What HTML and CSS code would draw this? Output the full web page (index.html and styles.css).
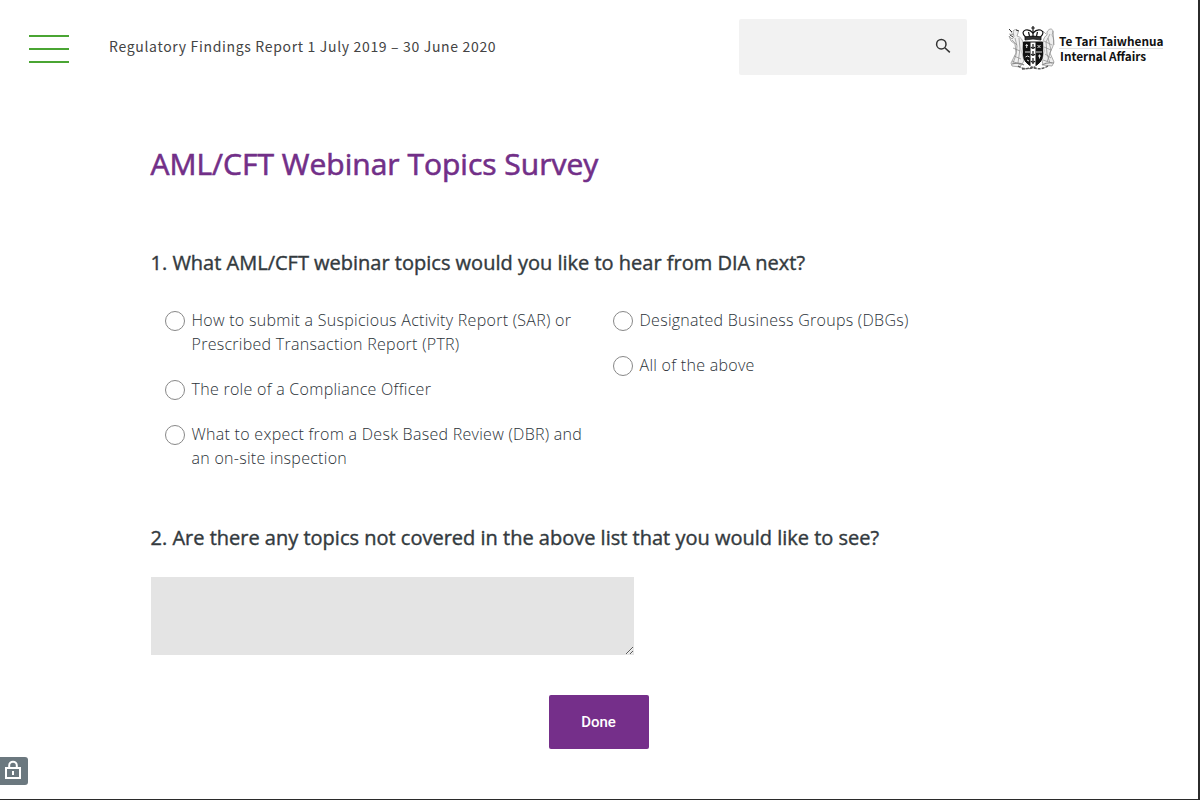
FILE: index.html
```html
<!DOCTYPE html>
<html lang="en">
<head>
<meta charset="utf-8">
<title>AML/CFT Webinar Topics Survey</title>
<link rel="stylesheet" href="styles.css">
</head>
<body>
<div class="page">
  <header class="header">
    <button class="menu" aria-label="Menu"><span></span><span></span><span></span></button>
    <div class="report">Regulatory Findings Report 1 July 2019 – 30 June 2020</div>
    <div class="search">
      <svg width="16" height="16" viewBox="0 0 16 16" fill="none" stroke="#333" stroke-width="1.5"><circle cx="6.3" cy="6.2" r="4.7"/><path d="M9.8 9.8L14.8 14.4"/></svg>
    </div>
    <div class="brand">
      <svg class="crest" width="48" height="46" viewBox="0 0 48 46" fill="none" stroke="#111" stroke-width=".8">
        <g stroke="#8a8a8a" stroke-width=".7">
          <path d="M5 5c3-3 6-1 5 2l-1 3c4 1 6 4 6 8l-1 8 2 9-4 6-8-1-1-3 5-10-1-9-4-3-2-5 3 3 2-2z" fill="#f0f0f0"/>
          <path d="M2 4l3 5M1 8l5 1M7 12l2 8-1 9-3 8M11 12l1 11-2 14M4 14l5 5M5 22l7 3M6 30l7 3M4 35l9 4"/>
          <path d="M39 6c2-4 6-4 6 0l-1 3c2 3 2 7 1 11l-3 7 4 9-2 4-9-1-1-5 2-9-1-8c0-4 2-7 4-8z" fill="#eee"/>
          <path d="M42 8l-4 8 1 12 3 9M45 5l1 14M36 15l8 4M36 21l7 3M37 28l6 4M35 34l9 3M40 12l3 12-4 12M38 8l-3-3"/>
          <path d="M1 3l3 3M2 9l3 2M8 4l3 1" stroke="#333" stroke-width="1"/>
        </g>
        <path d="M17.500 11q-5-5 0-7 4-1 7.500 3 3.500-4 7.500-3 5 2 0 7z" fill="#fff" stroke-width="1.200"/>
        <path d="M17 11q8-2 16 0v3q-8-2-16 0z" fill="#333"/>
        <path d="M25 0v11M23.200 2h3.600M20.500 6l1 4M29.500 6l-1 4" stroke-width="1.200"/>
        <path d="M15.500 16h19v13q0 8-9.500 12-9.500-4-9.500-12z" fill="#111" stroke-width="1"/>
        <path d="M22.500 16.500h5v23.500l-2.500 1-2.500-1z" fill="#fff" stroke="none"/>
        <path d="M25 18v5m-2-2q2 3 4 0M25 25v5m-2-2q2 3 4 0M25 32v6m-2-3q2 3 4 0" stroke-width="1.200"/>
        <path d="M17.500 19.500h2.500M18.700 18v4M17 26h5M28 26h6M17.500 31q2-2 4 0M19 34l2 1M29.500 19l3 3M32.500 19l-3 3M30 30h3M31.500 28.500v4" stroke="#ddd" stroke-width="1"/>
        <path d="M4 38q7-2 12 1M46 37q-7-1-12 2" stroke="#888" stroke-width="1.200"/>
        <path d="M10 40q6 4 15 2 9 2 15-2M14 43q6 0 11-2 6 3 11 1" stroke="#555" stroke-width="1.300" stroke-dasharray="3 1"/>
      </svg>
      <div class="brand-name"><span class="maori">Te Tari Taiwhenua</span><span class="english">Internal Affairs</span></div>
    </div>
  </header>
  <main class="survey">
    <h1 class="title">AML/CFT Webinar Topics Survey</h1>
    <h2 class="question q1">1. What AML/CFT webinar topics would you like to hear from DIA next?</h2>
    <div class="options">
      <div class="column">
        <label class="option"><input type="radio" name="topic"><span>How to submit a Suspicious Activity Report (SAR) or<br>Prescribed Transaction Report (PTR)</span></label>
        <label class="option"><input type="radio" name="topic"><span>The role of a Compliance Officer</span></label>
        <label class="option"><input type="radio" name="topic"><span>What to expect from a Desk Based Review (DBR) and<br>an on-site inspection</span></label>
      </div>
      <div class="column">
        <label class="option"><input type="radio" name="topic"><span>Designated Business Groups (DBGs)</span></label>
        <label class="option"><input type="radio" name="topic"><span>All of the above</span></label>
      </div>
    </div>
    <h2 class="question q2">2. Are there any topics not covered in the above list that you would like to see?</h2>
    <textarea class="answer" aria-label="Other topics"></textarea>
    <button class="done">Done</button>
  </main>
  <div class="lock">
    <svg width="18" height="20" viewBox="0 0 18 20" fill="none" stroke="#fff" stroke-width="2"><rect x="2" y="8" width="14" height="10"/><path d="M5.2 8V5.500a3.800 3.800 0 0 1 7.600 0V8M9 11v4"/></svg>
  </div>
</div>
</body>
</html>
```
FILE: styles.css
```css
* { box-sizing: border-box; }
body { margin: 0; background: #fff; font-family: "Open Sans", sans-serif; color: #333e48; }
.page { position: relative; width: 1200px; height: 800px; overflow: hidden; border-right: 2px solid #2b2b2b; border-bottom: 1px solid #2b2b2b; }
.header { display: flex; height: 94px; padding-left: 29px; align-items: flex-start; }
.menu { display: flex; flex-direction: column; gap: 11px; width: 40px; margin: 35px 40px 0 0; padding: 0; border: 0; background: none; }
.menu span { display: block; width: 40px; height: 2px; background: #4aa533; }
.report { width: 630px; margin-top: 34px; font: 400 14px/24px "Noto Sans CJK SC", sans-serif; letter-spacing: .67px; color: #444; white-space: nowrap; }
.search { display: flex; justify-content: flex-end; width: 228px; height: 56px; margin-top: 19px; padding: 19px 16px 0 0; border-radius: 2px; background: #f2f2f2; }
.brand { display: flex; margin: 26px 0 0 41px; }
.crest { flex: none; }
.brand-name { display: flex; flex-direction: column; margin: 8px 0 0 3px; font: 700 11.8px/14px "Noto Sans CJK SC", sans-serif; color: #111; white-space: nowrap; }
.maori { height: 15px; border-bottom: 1px solid #e2e2e2; }
.english { padding-left: 1px; }
.survey { display: flex; flex-direction: column; width: 895px; margin-left: 151px; }
.title { margin: 48px 0 0 -.5px; font-size: 30px; line-height: 44px; font-weight: 400; color: #722f88; -webkit-text-stroke: .6px #722f88; white-space: nowrap; }
.question { margin: 0 0 0 -.5px; font-size: 20px; line-height: 28px; font-weight: 400; color: #333a3e; -webkit-text-stroke: .4px #333a3e; white-space: nowrap; }
.q1 { margin-top: 63px; }
.q2 { margin-top: 54px; }
.options { display: grid; grid-template-columns: 448px 448px; margin-top: 31px; padding-left: 14px; }
.column { display: flex; flex-direction: column; gap: 21px; }
.option { display: flex; gap: 6.5px; font-size: 16px; line-height: 24px; font-weight: 300; letter-spacing: .28px; color: #2b3238; white-space: nowrap; }
.option input { appearance: none; flex: none; width: 20px; height: 20px; margin: 3px 0 0; border: 1px solid #888; border-radius: 50%; background: #fff; }
.answer { width: 483px; height: 78px; margin: 25px 0 40px; padding: 8px; border: 0; border-radius: 0; background: #e4e4e4; resize: both; }
.done { align-self: center; width: 100px; height: 54px; padding: 0; border: 0; border-radius: 2px; background: #752f8a; color: #fff; font: 500 15px/54px Roboto, sans-serif; }
.lock { position: absolute; left: 0; top: 757px; display: flex; justify-content: center; width: 28px; height: 28px; padding: 3px 2px 0 0; border-radius: 0 3px 3px 0; background: #6b787f; }
```
